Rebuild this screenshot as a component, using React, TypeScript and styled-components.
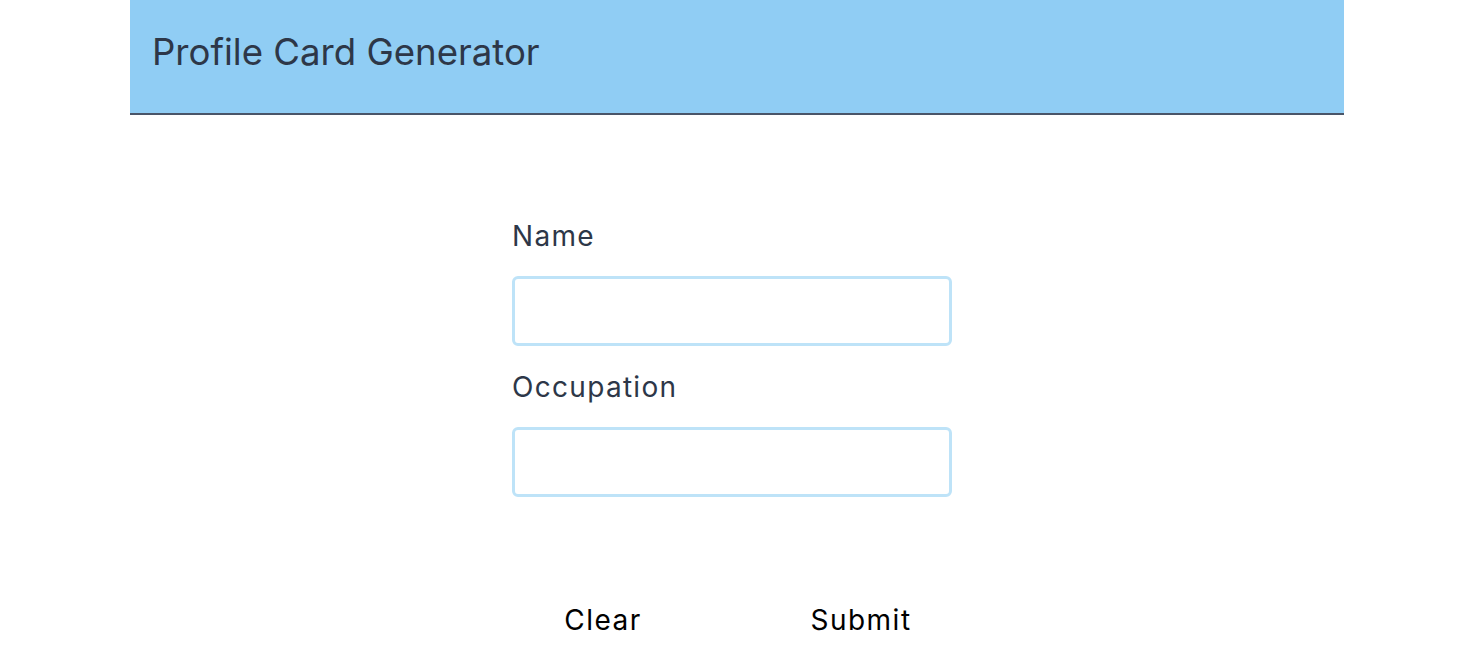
import React from "react";
import styled, { createGlobalStyle } from "styled-components";

const GlobalStyle = createGlobalStyle`
  html, body {
    margin: 0;
    padding: 0;
    background: #ffffff;
    font-family: Inter, "Noto Sans", "Liberation Sans", sans-serif;
  }
  * { box-sizing: border-box; }
`;

const Page = styled.div`
  width: 1214px;
  margin: 0 auto;
`;

const Header = styled.header`
  height: 115px;
  background: #90cdf4;
  border-bottom: 2px solid #4a5568;
  padding: 30px 22px 0;
`;

const Title = styled.h1`
  margin: 0;
  font-size: 36.6px;
  font-weight: 400;
  line-height: 1.21;
  color: #2d3748;
`;

const Main = styled.main`
  display: flex;
  justify-content: center;
  padding: 102px 10px 0 0;
`;

const Form = styled.form`
  width: 440px;
  display: flex;
  flex-direction: column;
`;

const Field = styled.div<{ $last?: boolean }>`
  display: flex;
  flex-direction: column;
  margin-bottom: ${(p) => (p.$last ? "0" : "22px")};
`;

const Label = styled.label`
  font-size: 28px;
  line-height: 39px;
  letter-spacing: 1.3px;
  color: #2d3748;
  margin-bottom: 20px;
`;

const Input = styled.input`
  width: 440px;
  height: 70px;
  border: 3px solid #bee3f8;
  border-radius: 6px;
  outline: none;
  font-size: 24px;
  padding: 0 12px;
  font-family: inherit;
`;

const ButtonRow = styled.div`
  display: flex;
  justify-content: center;
  gap: 98px;
  margin-top: 103px;
`;

const Button = styled.button`
  width: 160px;
  background: transparent;
  border: none;
  padding: 0;
  font-family: inherit;
  font-size: 28px;
  line-height: 40px;
  letter-spacing: 1.5px;
  color: #000000;
  cursor: pointer;
`;

export default function App() {
  return (
    <>
      <GlobalStyle />
      <Page>
        <Header>
          <Title>Profile Card Generator</Title>
        </Header>
        <Main>
          <Form onSubmit={(e) => e.preventDefault()}>
            <Field>
              <Label htmlFor="name">Name</Label>
              <Input id="name" type="text" />
            </Field>
            <Field $last>
              <Label htmlFor="occupation">Occupation</Label>
              <Input id="occupation" type="text" />
            </Field>
            <ButtonRow>
              <Button type="button">Clear</Button>
              <Button type="submit">Submit</Button>
            </ButtonRow>
          </Form>
        </Main>
      </Page>
    </>
  );
}
